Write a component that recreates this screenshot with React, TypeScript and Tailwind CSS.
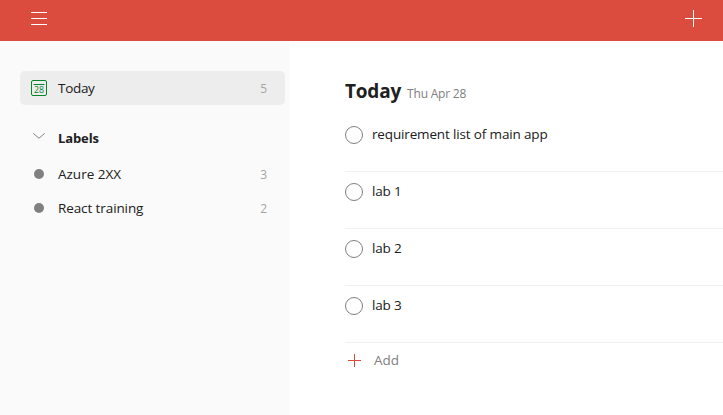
import React from "react";

const labels = [
  { name: "Azure 2XX", count: 3, spacing: "tracking-[0px]" },
  { name: "React training", count: 2, spacing: "tracking-[-0.1px]" },
];

const tasks = ["requirement list of main app", "lab 1", "lab 2", "lab 3"];

function MenuIcon() {
  return (
    <svg width="16" height="14" viewBox="0 0 16 14" stroke="#fff" strokeWidth="1">
      <path d="M0 .5h16M0 6.500h16M0 12.500h16" />
    </svg>
  );
}

function CalendarIcon() {
  return (
    <svg width="16" height="16" viewBox="0 0 16 16" fill="none" stroke="#058527">
      <rect x=".5" y=".5" width="15" height="15" rx="1.500" />
      <path d="M2.500 4.500h11" />
      <text x="8" y="13" textAnchor="middle" fontSize="9" fill="#058527" stroke="none" className="font-['Open_Sans',sans-serif]" textLength="10" lengthAdjust="spacingAndGlyphs">
        28
      </text>
    </svg>
  );
}

export default function App() {
  return (
    <div className="flex h-[415px] w-[723px] flex-col overflow-hidden bg-white font-['Open_Sans','Noto_Sans',sans-serif] text-[13.5px] text-[#202020]">
      <header className="flex h-[41px] shrink-0 items-start justify-between bg-[#db4c3f] pl-[31px] pr-[21px]">
        <button className="mt-3" aria-label="Menu"><MenuIcon /></button>
        <button className="mt-[10px]" aria-label="Add task">
          <svg width="17" height="17" viewBox="0 0 17 17" stroke="#fff"><path d="M0 8.500h17M8.500 0v17" /></svg>
        </button>
      </header>
      <div className="flex flex-1">
        <nav className="w-[290px] shrink-0 border-r border-[#fcfcfc] bg-[#fafafa] pl-5 pr-1 pt-[30px]">
          <div className="flex h-[34px] items-center rounded-[5px] bg-[#ededed] pl-[11px] pr-[18px]">
            <CalendarIcon />
            <span className="ml-[11px] flex-1 tracking-[-0.3px]">Today</span>
            <span className="pt-px text-[12px] text-[#a5a5a5]">5</span>
          </div>
          <div className="mt-4 flex h-[34px] items-center pl-[13px]">
            <svg className="-mt-1" width="12" height="6" viewBox="0 0 12 6" fill="none" stroke="#808080">
              <path d="M.300 .300L6 5.300L11.700 .300" />
            </svg>
            <span className="ml-[13px] pt-[2px] text-[13px] font-bold tracking-[-0.1px]">Labels</span>
          </div>
          <div className="mt-[2px]">
            {labels.map((label) => (
              <div key={label.name} className="flex h-[34px] items-center pl-[14px] pr-[18px]">
                <span className="size-[10px] rounded-full bg-[#808080]" />
                <span className={`ml-[14px] flex-1 ${label.spacing}`}>{label.name}</span>
                <span className="pt-px text-[12px] text-[#a5a5a5]">{label.count}</span>
              </div>
            ))}
          </div>
        </nav>
        <main className="flex-1 pl-[55px] pt-[35px]">
          <h1 className="flex h-[30px] items-baseline leading-[30px]">
            <span className="text-[19px] font-bold tracking-[-0.2px]">Today</span>
            <small className="ml-[6px] text-[12px] tracking-[-0.2px] text-[#808080]">Thu Apr 28</small>
          </h1>
          <ul className="mt-[9px]">
            {tasks.map((task) => (
              <li key={task} className="flex h-[57px] items-start border-b border-[#f0f0f0] pt-[11px]">
                <span className="size-[18px] rounded-full border border-[#808080]" />
                <span className="ml-[9px] leading-4 tracking-[-0.15px]">{task}</span>
              </li>
            ))}
          </ul>
          <button className="ml-[3px] mt-[8px] flex items-center leading-[18px] text-[#808080]">
            <svg width="13" height="13" viewBox="0 0 13 13" stroke="#dd4b39"><path d="M0 6.500h13M6.500 0v13" /></svg>
            <span className="ml-[13px]">Add</span>
          </button>
        </main>
      </div>
    </div>
  );
}
